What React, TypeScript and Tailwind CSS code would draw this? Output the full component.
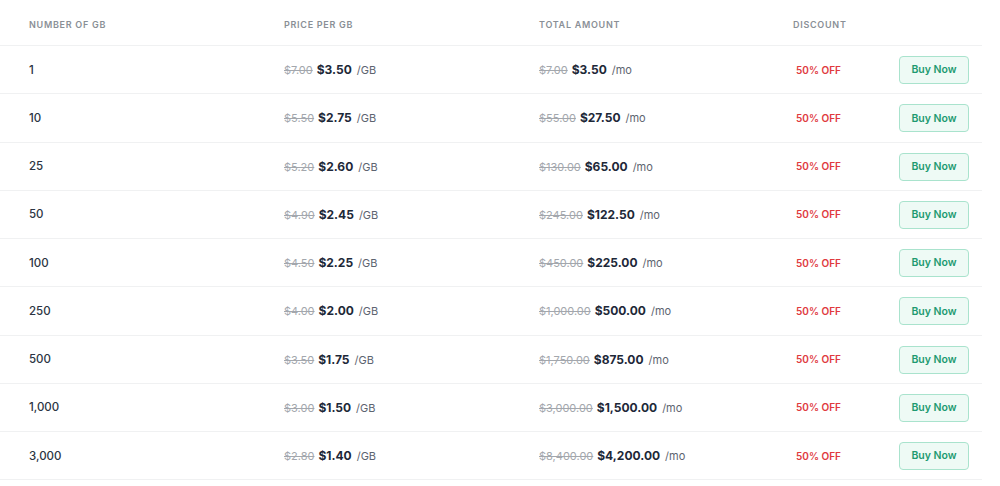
import React from 'react';

interface Row {
  gb: string;
  oldPrice: string;
  price: string;
  oldTotal: string;
  total: string;
}

const rows: Row[] = [
  { gb: '1', oldPrice: '$7.00', price: '$3.50', oldTotal: '$7.00', total: '$3.50' },
  { gb: '10', oldPrice: '$5.50', price: '$2.75', oldTotal: '$55.00', total: '$27.50' },
  { gb: '25', oldPrice: '$5.20', price: '$2.60', oldTotal: '$130.00', total: '$65.00' },
  { gb: '50', oldPrice: '$4.90', price: '$2.45', oldTotal: '$245.00', total: '$122.50' },
  { gb: '100', oldPrice: '$4.50', price: '$2.25', oldTotal: '$450.00', total: '$225.00' },
  { gb: '250', oldPrice: '$4.00', price: '$2.00', oldTotal: '$1,000.00', total: '$500.00' },
  { gb: '500', oldPrice: '$3.50', price: '$1.75', oldTotal: '$1,750.00', total: '$875.00' },
  { gb: '1,000', oldPrice: '$3.00', price: '$1.50', oldTotal: '$3,000.00', total: '$1,500.00' },
  { gb: '3,000', oldPrice: '$2.80', price: '$1.40', oldTotal: '$8,400.00', total: '$4,200.00' },
];

const Price: React.FC<{ old: string; now: string; unit: string }> = ({ old, now, unit }) => (
  <div className="flex items-baseline">
    <span className="text-[11px] text-[#a3a7ad] line-through">{old}</span>
    <span className="ml-[4px] text-[12px] font-bold text-[#1d2838]">{now}</span>
    <span className="ml-[5px] text-[11px] text-[#5d6470]">{unit}</span>
  </div>
);

const App: React.FC = () => {
  return (
    <div className="w-[1000px] h-[486px] bg-white" style={{ fontFamily: 'Inter, "Open Sans", sans-serif' }}>
      <div className="w-[982px]">
        {/* Header */}
        <div className="flex items-center h-[46px] pt-[5px] border-b border-[#f0f1f2] text-[9px] font-semibold tracking-[0.08em] text-[#8a8f96] uppercase">
          <div className="w-[255px] pl-[29px]">Number of GB</div>
          <div className="w-[255px] pl-[29px]">Price per GB</div>
          <div className="w-[255px] pl-[29px]">Total Amount</div>
          <div className="pl-[28px]">Discount</div>
        </div>

        {rows.map((r) => (
          <div key={r.gb} className="flex items-center h-[48.25px] pt-[1px] border-b border-[#f0f1f2]">
            <div className="w-[255px] pl-[29px] text-[11.5px] font-medium text-[#2b3442]">{r.gb}</div>
            <div className="w-[255px] pl-[29px]">
              <Price old={r.oldPrice} now={r.price} unit="/GB" />
            </div>
            <div className="w-[255px] pl-[29px]">
              <Price old={r.oldTotal} now={r.total} unit="/mo" />
            </div>
            <div className="w-[134px] pl-[31px] text-[10px] font-semibold text-[#e03a3e]">50% OFF</div>
            <button className="w-[70px] h-[28px] rounded-[4px] border border-[#a9e3cd] bg-[#eefaf5] text-[10.5px] font-semibold text-[#1e9a71]">
              Buy Now
            </button>
          </div>
        ))}
      </div>
    </div>
  );
};

export default App;
